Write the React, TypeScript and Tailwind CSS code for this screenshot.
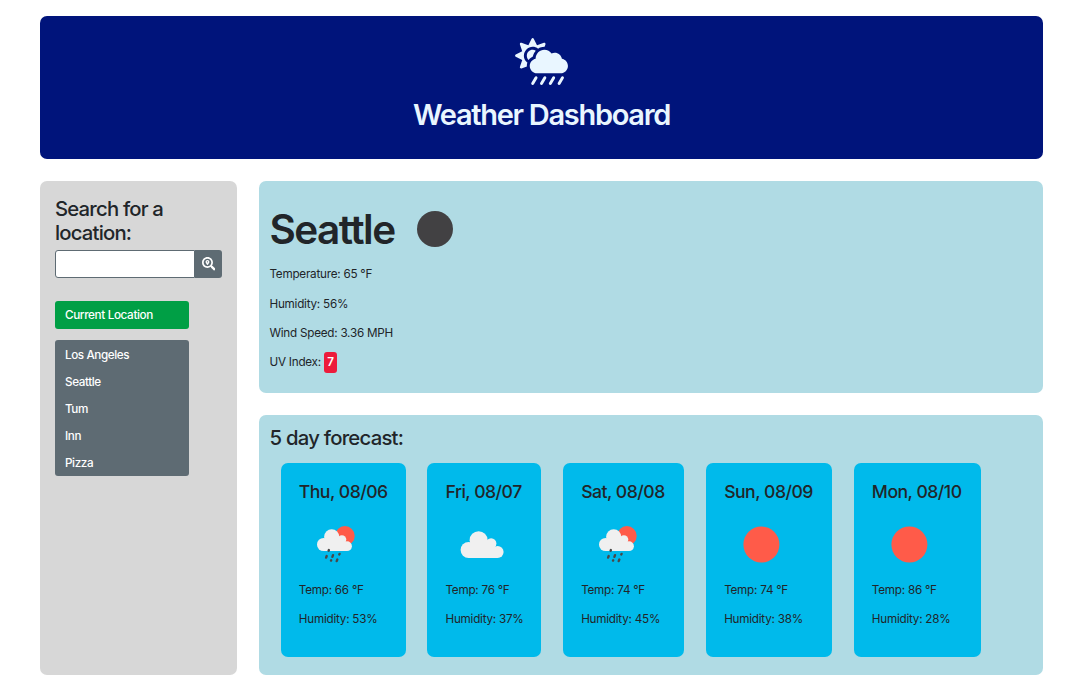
import { FaCloudSunRain, FaSearchLocation } from "react-icons/fa";

type Sky = "rain" | "cloud" | "sun";

const cities = ["Los Angeles", "Seattle", "Tum", "Inn", "Pizza"];

const forecast: { day: string; sky: Sky; temp: number; humidity: number; box: string }[] = [
  { day: "Thu, 08/06", sky: "rain", temp: 66, humidity: 53, box: "w-[125px]" },
  { day: "Fri, 08/07", sky: "cloud", temp: 76, humidity: 37, box: "w-[114px]" },
  { day: "Sat, 08/08", sky: "rain", temp: 74, humidity: 45, box: "w-[121.3px]" },
  { day: "Sun, 08/09", sky: "sun", temp: 74, humidity: 38, box: "w-[126px]" },
  { day: "Mon, 08/10", sky: "sun", temp: 86, humidity: 28, box: "w-[127px]" },
];

function SkyIcon({ sky }: { sky: Sky }) {
  return (
    <svg className="block h-[73px] w-[73px]" viewBox="0 0 73 73">
      {sky === "sun" && <circle cx="37.4" cy="36.5" r="18" fill="#ff5b49" />}
      {sky === "cloud" && (
        <g fill="#f0f0f0">
          <circle cx="33.6" cy="32.2" r="9" />
          <circle cx="23.6" cy="42" r="8" />
          <circle cx="46.1" cy="35.6" r="5.3" />
          <circle cx="52.6" cy="44" r="6" />
          <path d="M23.6 38l4-5h18l3 6 4 3v8h-29z" />
        </g>
      )}
      {sky === "rain" && (
        <>
          <circle cx="45.9" cy="27.9" r="9.8" fill="#ff5b49" />
          <g fill="#f0f0f0">
            <circle cx="32.7" cy="28.9" r="7.6" />
            <circle cx="24.6" cy="36.5" r="6.6" />
            <circle cx="42.9" cy="31.6" r="4.4" />
            <circle cx="48" cy="38.2" r="4.9" />
            <path d="M24.6 34l3-4h15l2.5 5 3 2v6.1H24.6z" />
          </g>
          <path
            d="M29.9 42l-.3.7M27.7 48l-.6 1.6M34 47.2l-.6 1.6M40.6 45.9l-.3.5M32.2 52.2l-.2.4M38.3 51.6l-.6 1.5"
            stroke="#484849"
            strokeWidth="2.4"
            strokeLinecap="round"
          />
        </>
      )}
    </svg>
  );
}

export default function App() {
  return (
    <div className="flex h-[698px] w-[1076px] flex-col gap-[22px] overflow-hidden bg-white pt-4 pl-[40.4px] font-['Inter','Liberation_Sans',sans-serif] text-[11.7px] leading-[18px] tracking-[-0.24px] text-[#212529]">
      <header className="flex h-[143px] w-[1002.3px] flex-col items-center rounded-[7px] bg-[#00147b] pt-[22px] text-[#e9f6ff]">
        <FaCloudSunRain className="h-[47px] w-[53px]" />
        <h1 className="mt-[12px] text-[29px] leading-[35px] font-[560] tracking-[-1.3px] whitespace-nowrap">
          Weather Dashboard
        </h1>
      </header>

      <div className="flex gap-[22px]">
        <aside className="h-[494px] w-[196.5px] shrink-0 rounded-[7px] bg-[#d7d7d7] px-[14.6px] pt-4">
          <h2 className="text-[20.3px] leading-6 font-medium tracking-[-0.8px]">
            Search for a<br />
            location:
          </h2>
          <form className="mt-[5px] flex h-7 w-[167px]">
            <input
              aria-label="Location"
              className="w-[140px] rounded-l-[3px] border-[1.5px] border-[#5e6b73] bg-white outline-none"
            />
            <button
              type="button"
              aria-label="Search"
              className="flex w-[27px] items-center justify-center rounded-r-[3px] bg-[#5e6b73] text-white"
            >
              <FaSearchLocation className="h-[13.5px] w-[13.5px]" />
            </button>
          </form>
          <button
            type="button"
            className="mt-[23px] flex h-7 w-[134px] items-center rounded-[3px] bg-[#009f45] pl-[10px] font-medium tracking-[-0.36px] text-white"
          >
            Current Location
          </button>
          <ul className="mt-[11px] flex w-[134px] flex-col rounded-[3px] bg-[#5e6b73] pt-[1px] font-medium tracking-[-0.4px] text-white">
            {cities.map((city) => (
              <li key={city} className="flex h-[27px] items-center pl-[10px]">
                {city}
              </li>
            ))}
          </ul>
        </aside>

        <main className="flex w-[783.8px] flex-col gap-[22px]">
          <section className="h-[212px] rounded-[7px] bg-[#b0dbe4] pt-[11px] pl-[10.6px]">
            <div className="flex h-[73px] items-center">
              <h2 className="w-[125px] pt-[2px] text-[40.5px] leading-[49px] font-semibold tracking-[-1.55px]">Seattle</h2>
              <svg className="ml-[3px] h-[73px] w-[73px]" viewBox="0 0 73 73">
                <circle cx="38" cy="37" r="18" fill="#424143" />
              </svg>
            </div>
            <div className="flex flex-col">
              <p>Temperature: 65 °F</p>
              <p className="mt-[12px]">Humidity: 56%</p>
              <p className="mt-[11px]">Wind Speed: 3.36 MPH</p>
              <p className="mt-[11px] flex items-center gap-[3px]">
                UV Index:
                <span className="-my-1 flex h-[21px] w-[13px] items-center justify-center rounded-[3px] bg-[#ed1b3b] font-semibold text-white">
                  7
                </span>
              </p>
            </div>
          </section>

          <section className="h-[260px] rounded-[7px] bg-[#b0dbe4] pt-[10px] pl-[10.6px]">
            <h3 className="text-[20.3px] leading-[25px] font-medium tracking-[-0.75px]">5 day forecast:</h3>
            <div className="mt-[13px] ml-[11.3px] flex gap-[21.7px]">
              {forecast.map((f) => (
                <article key={f.day} className={`${f.box} h-[194px] shrink-0 rounded-[7px] bg-[#00baeb] pt-[18px] pl-[18px]`}>
                  <h4 className="text-[17.6px] leading-[22px] font-medium tracking-[-0.5px] whitespace-nowrap">{f.day}</h4>
                  <div className="mt-[5px]">
                    <SkyIcon sky={f.sky} />
                  </div>
                  <p>Temp: {f.temp} °F</p>
                  <p className="mt-[11px]">Humidity: {f.humidity}%</p>
                </article>
              ))}
            </div>
          </section>
        </main>
      </div>
    </div>
  );
}
